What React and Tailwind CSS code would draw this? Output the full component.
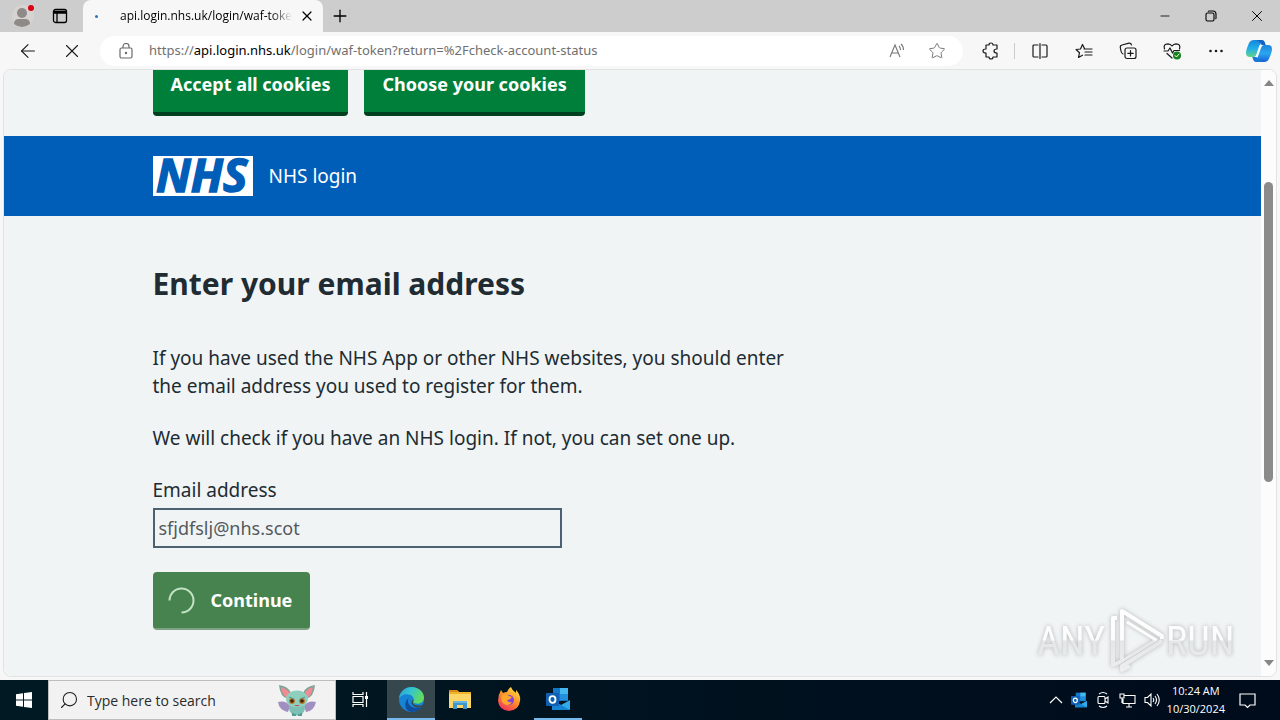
import { Star, X, Plus, Minus, ArrowLeft, Search } from "lucide-react";

const ui = "font-['Open_Sans','Noto_Sans',sans-serif]";

function TabStrip() {
    return (
        <header className="flex h-8 shrink-0 items-stretch bg-[#cdcdcd] text-black">
            <div className="flex w-[83px] items-center gap-[18px] pl-3">
                <button aria-label="Profile" className="relative">
                    <svg width="22" height="22" viewBox="0 0 22 22">
                        <circle cx="11" cy="11" r="11" fill="#d6d3d1" />
                        <circle cx="10" cy="8" r="5" fill="#8f8a87" />
                        <path d="M2 19q0-5 5-5h6q5 0 5 5-8 6-16 0z" fill="#8f8a87" />
                        <circle cx="19" cy="3" r="3" fill="#d90012" />
                    </svg>
                </button>
                <button aria-label="Tab actions">
                    <svg width="16" height="16" viewBox="0 0 16 16" fill="none" stroke="#000" strokeWidth="1.3">
                        <rect x="1.5" y="1.5" width="13" height="13" rx="2" />
                        <path d="M2 3.5h12M2 5h12M5 5v9" />
                    </svg>
                </button>
            </div>
            <div className="flex w-60 items-center rounded-t-lg bg-[#f7f7f7] pr-2">
                <span className="ml-3 size-[3px] rounded-full bg-[#2b74b8]" />
                <span className={`ml-[22px] w-[172px] overflow-hidden text-[12px] whitespace-nowrap [mask-image:linear-gradient(to_right,#000_88%,transparent)] ${ui}`}>
                    api.login.nhs.uk/login/waf-token
                </span>
                <button aria-label="Close tab" className="ml-auto">
                    <X size={16} strokeWidth={1.8} />
                </button>
            </div>
            <button aria-label="New tab" className="px-[7px]">
                <Plus size={20} strokeWidth={1.6} />
            </button>
            <div className="ml-auto flex">
                <button aria-label="Minimize" className="flex w-[46px] items-center justify-center">
                    <Minus size={14} strokeWidth={1.4} />
                </button>
                <button aria-label="Restore" className="flex w-[46px] items-center justify-center">
                    <svg width="12" height="12" viewBox="0 0 12 12" fill="none" stroke="#000" strokeWidth="1.1">
                        <rect x="1" y="3" width="8" height="8" rx="1.5" />
                        <path d="M3 1.5Q3.500 1 4 1h4q3 0 3 3v4q0 .5-.5 1" />
                    </svg>
                </button>
                <button aria-label="Close" className="flex w-[46px] items-center justify-center">
                    <X size={18} strokeWidth={1.3} />
                </button>
            </div>
        </header>
    );
}

function ToolIcon({ label, children }) {
    return (
        <button aria-label={label} className="flex w-11 items-center justify-center">
            <svg width="18" height="18" viewBox="0 0 18 18" fill="none" stroke="#1a1a1a" strokeWidth="1.2" strokeLinejoin="round" strokeLinecap="round">
                {children}
            </svg>
        </button>
    );
}

function CopilotLogo() {
    return (
        <svg width="26" height="24" viewBox="0 0 26 24">
            <defs>
                <linearGradient id="cpA" x1="0" y1="0" x2="0" y2="1">
                    <stop offset="0" stopColor="#1386d8" />
                    <stop offset=".5" stopColor="#20aeea" />
                    <stop offset="1" stopColor="#62d38b" />
                </linearGradient>
                <linearGradient id="cpB" x1="0" y1="0" x2="0" y2="1">
                    <stop offset="0" stopColor="#1b86dc" />
                    <stop offset=".5" stopColor="#2ba6f0" />
                    <stop offset="1" stopColor="#1660d8" />
                </linearGradient>
            </defs>
            <path d="M8 1h8l-5 14q-.8 3-3 3H4q-4 0-4-4 0-2 1-5l2-5Q4.500 1 8 1z" fill="url(#cpA)" />
            <path d="M18 23H10l5-14q.8-3 3-3h4q4 0 4 4 0 2-1 5l-1.500 3.500Q22 23 18 23z" fill="url(#cpB)" />
            <path d="M10 1h6q2 0 2.700 2l1 3h-4q-2-4-5.700-5z" fill="#1262c4" />
            <path d="M16 23h-6q-2 0-2.700-2l-1-3h3q3 0 6.700 5z" fill="#1a78d6" />
            <path d="M13.500 6H16q-1 1-1.500 3l-2.500 7q-.7 2-2 2H8.500q1.200-.5 2-3z" fill="#f4f9fc" />
        </svg>
    );
}

function Toolbar() {
    return (
        <nav className="flex h-[37px] shrink-0 items-center bg-[#f7f7f7] text-[#1a1a1a]">
            <button aria-label="Back" className="flex w-11 justify-center pl-3">
                <ArrowLeft size={22} strokeWidth={1.2} />
            </button>
            <button aria-label="Stop" className="flex w-11 justify-center pl-3">
                <X size={22} strokeWidth={1.2} />
            </button>
            <div className="ml-3 flex h-[30px] flex-1 items-center rounded-full bg-white pl-[18px]">
                <svg width="16" height="16" viewBox="0 0 16 16" fill="none" stroke="#6b6b6b" strokeWidth="1.2">
                    <rect x="2" y="5" width="12" height="10" rx="1.500" />
                    <path d="M5 5V3.500a3 3 0 0 1 6 0V5" />
                    <circle cx="8" cy="10" r=".6" fill="#6b6b6b" />
                </svg>
                <div className="ml-[15px] flex-1 font-['Noto_Sans',sans-serif] text-[13px] text-[#707070]">
                    https://<span className="text-black">api.login.nhs.uk</span>/login/waf-token?return=%2Fcheck-account-status
                </div>
                <button aria-label="Read aloud" className="mr-[22px]">
                    <svg width="18" height="18" viewBox="0 0 18 18" fill="none" stroke="#767676" strokeWidth="1.1">
                        <path d="M2 15 7 3l5 12M3.500 11h7M11 4q1.500 1.500 1.500 4M13 2q2.500 2 2.500 6" />
                    </svg>
                </button>
                <button aria-label="Favourite" className="mr-[17px]">
                    <Star size={18} strokeWidth={1.3} color="#767676" />
                </button>
            </div>
            <div className="flex pl-1.5">
                <ToolIcon label="Extensions">
                    <path d="M4 3h3q0-2 2-2t2 2h4v4q-3 0-3 2t3 2v4h-4q0 2-2 2t-2-2H4v-4q-3 0-3-2t3-2z" />
                </ToolIcon>
                <span className="mr-[3px] ml-px h-4 w-px self-center bg-[#cccccc]" />
                <ToolIcon label="Split screen">
                    <path d="M7 3H3Q2 3 2 4v10q0 1 1 1h4M11 3h4q1 0 1 1v10q0 1-1 1h-4M9 1.500v15" />
                </ToolIcon>
                <ToolIcon label="Favourites">
                    <path d="M9.500 6.500 7.500 2.500 5.500 7 1 7.500l3.500 3.200L3.500 15.500l4-2.300M9 7h8M10 10h7M10 13h7" />
                </ToolIcon>
                <ToolIcon label="Collections">
                    <rect x="6" y="6" width="11" height="10.500" rx="2" />
                    <path d="M11.500 8.500v5.500M8.800 11.300h5.400M4 12Q2.500 11.500 2 9L1.300 5.500Q1 3.500 3 3l7-1.800Q12 1 12.500 3" />
                </ToolIcon>
                <ToolIcon label="Browser essentials">
                    <path d="M1.500 7Q0 2 5 1.800 7.500 2 9 4q1.500-2 4-2.200Q18 2 16.500 7M1 9h4l2-3 2.500 5L11 8.500h5.500M4 11.500l5 4.500" />
                    <circle cx="14" cy="13.500" r="4" fill="#16821d" stroke="none" />
                    <path d="m12 13.500 1.500 1.500 2.500-3" stroke="#fff" strokeWidth="1" />
                </ToolIcon>
                <ToolIcon label="More">
                    <g fill="#1a1a1a" stroke="none">
                        <circle cx="3.500" cy="9" r="1.300" />
                        <circle cx="9" cy="9" r="1.300" />
                        <circle cx="14.500" cy="9" r="1.300" />
                    </g>
                </ToolIcon>
            </div>
            <button aria-label="Copilot" className="mr-2 ml-2">
                <CopilotLogo />
            </button>
        </nav>
    );
}

function CookieButton({ children }) {
    return (
        <button className="h-[60px] rounded border-b-4 border-[#00401e] bg-[#007f3b] px-[18px] text-[18px] font-bold text-white">
            {children}
        </button>
    );
}

function LoginPage() {
    return (
        <main className="min-w-0 flex-1 overflow-hidden bg-[#f0f4f5] font-['Noto_Sans',sans-serif] text-[#212b32]">
            <div className="flex h-[66px] items-end overflow-hidden pb-5">
                <div className="mx-auto flex w-full max-w-[960px] gap-4">
                    <CookieButton>Accept all cookies</CookieButton>
                    <CookieButton>Choose your cookies</CookieButton>
                </div>
            </div>
            <div className="bg-[#005eb8] py-5">
                <div className="mx-auto flex max-w-[960px] items-center gap-4 text-[19px] text-white">
                    <svg width="100" height="40" viewBox="0 0 100 40" role="img" aria-label="NHS" className="overflow-visible">
                        <rect width="100" height="40" fill="#fff" />
                        <text x="3" y="36" fill="#005eb8" stroke="#005eb8" strokeWidth="1.500" className="font-['Open_Sans',sans-serif] text-[46px] font-bold italic">NHS</text>
                    </svg>
                    <a href="#login">NHS login</a>
                </div>
            </div>
            <form className="mx-auto max-w-[960px] pt-12 text-[19px] leading-7" onSubmit={(e) => e.preventDefault()}>
                <div className="max-w-[640px]">
                    <h1 className="mb-10 text-[30px] leading-10 font-bold">Enter your email address</h1>
                    <p className="mb-6">
                        If you have used the NHS App or other NHS websites, you should enter the email address you used to register for them.
                    </p>
                    <p className="mb-6">We will check if you have an NHS login. If not, you can set one up.</p>
                    <label htmlFor="email" className="mb-1 block">Email address</label>
                    <input
                        id="email"
                        type="email"
                        defaultValue="sfjdfslj@nhs.scot"
                        className="mb-6 block h-10 w-full max-w-[409px] border-2 border-[#4c6272] px-1 text-[18px] text-[#54595c]"
                    />
                    <button className="flex h-[58px] items-center gap-4 rounded border-b-2 border-[#7fa287] bg-[#46834e] pr-[18px] pl-[15px] text-[18px] font-bold text-white">
                        <svg width="27" height="27" viewBox="0 0 27 27" fill="none" stroke="#c4e3c5" strokeWidth="2">
                            <path d="M1.500 13.500a12 12 0 1 1 12 12" />
                        </svg>
                        Continue
                    </button>
                </div>
            </form>
        </main>
    );
}

function Scrollbar() {
    return (
        <div className="flex w-[15px] shrink-0 flex-col items-center justify-between bg-[#fcfcfc] py-2.5">
            <svg width="10" height="6" viewBox="0 0 10 6"><path d="M5 0l5 6H0z" fill="#868686" /></svg>
            <div className="flex w-full flex-1 flex-col items-center">
                <div className="flex-[95]" />
                <div className="w-[9px] flex-[299] rounded-full bg-[#8b8b8b]" />
                <div className="flex-[177]" />
            </div>
            <svg width="10" height="6" viewBox="0 0 10 6"><path d="M0 0h10L5 6z" fill="#868686" /></svg>
        </div>
    );
}

function Watermark() {
    return (
        <svg className="pointer-events-none absolute right-10 bottom-1 overflow-visible drop-shadow-[0_0_2px_#b4b4b4]" width="200" height="70" viewBox="0 0 200 70">
            <defs>
                <linearGradient id="wm" gradientUnits="userSpaceOnUse" x1="0" y1="0" x2="0" y2="70">
                    <stop offset="0" stopColor="#ffffff" />
                    <stop offset=".54" stopColor="#fbfcfc" />
                    <stop offset=".56" stopColor="#e4e7e8" />
                    <stop offset="1" stopColor="#eceeef" />
                </linearGradient>
            </defs>
            <g fill="url(#wm)" className="font-['Liberation_Sans_Narrow','Roboto_Condensed','Roboto',sans-serif] text-[40px]">
                <text x="1" y="53">ANY</text>
                <text x="130" y="53">RUN</text>
            </g>
            <g fill="none" stroke="url(#wm)" strokeWidth="4" strokeLinejoin="round">
                <path d="M81 16h-4v47l9-4" />
                <path d="M86 60V9l40 25v3" />
                <path d="M126 39 86 64v4l8-4" />
                <path d="M91 20l29 18-34 21" strokeWidth="3" />
            </g>
        </svg>
    );
}

function Mascot() {
    return (
        <svg width="40" height="34" viewBox="0 0 40 34">
            <path d="M1 19q8-2 12 4l-2 6Q2 27 1 19zM39 19q-8-2-12 4l2 6q8-1 10-10z" fill="#a08fc0" />
            <path d="M2 2q9 1 12 8l-3 6Q3 14 2 2zM38 2q-9 1-12 8l3 6q8-2 9-14z" fill="#79a598" />
            <path d="M4 4q7 2 9 7l-3 4Q5 12 4 4zM36 4q-7 2-9 7l3 4q5-3 6-11z" fill="#f28a94" />
            <ellipse cx="20" cy="25" rx="8" ry="7.500" fill="#7dbfb2" />
            <ellipse cx="20" cy="16" rx="11" ry="8.500" fill="#8fcfbe" />
            <circle cx="15" cy="18" r="3" fill="#b87b30" />
            <circle cx="25" cy="18" r="3" fill="#b87b30" />
            <circle cx="15" cy="18" r="1.800" fill="#40210e" />
            <circle cx="25" cy="18" r="1.800" fill="#40210e" />
            <path d="M12 14l5 2M28 14l-5 2" stroke="#5b9487" />
            <path d="M17 22q3 2.500 6 0z" fill="#b0585c" />
            <path d="M16 30v3M18 31v2M22 31v2M24 30v3" stroke="#559d92" strokeWidth="2" />
        </svg>
    );
}

function OutlookIcon({ size }) {
    return (
        <svg width={size} height={size} viewBox="0 0 24 24">
            <path d="M7 1h15v13H7z" fill="#1476c8" />
            <path d="M14 1h8v6h-8z" fill="#45b8f0" />
            <path d="M14 7h8v6h-8z" fill="#248fdd" />
            <path d="M6 13l9 5 9-5v9q0 1-1 1H7q-1 0-1-1z" fill="#32a9e9" />
            <path d="M6 13l18 10H7q-1 0-1-1z" fill="#1684d3" />
            <rect y="6" width="13" height="13" rx="1" fill="#0f5fb4" />
            <ellipse cx="6.500" cy="12.500" rx="3" ry="3.300" fill="none" stroke="#fff" strokeWidth="1.800" />
        </svg>
    );
}

function EdgeIcon() {
    return (
        <svg width="25" height="25" viewBox="0 0 24 24">
            <defs>
                <linearGradient id="edgeTop" x1="0" y1="0" x2="1" y2=".4">
                    <stop offset="0" stopColor="#289ddc" />
                    <stop offset=".5" stopColor="#35c5ce" />
                    <stop offset="1" stopColor="#61dc60" />
                </linearGradient>
            </defs>
            <circle cx="12" cy="12" r="12" fill="#1683d4" />
            <path d="M0 11C1 4 6 0 12 0c7 0 12 5 12 10 0 4-3 6-6 6-4 0-5-1-4-3 1-3-2-6-6-6-4 0-7 2-8 4z" fill="url(#edgeTop)" />
            <path d="M9 11c-2 5 3 10 9 9 2 0 3-1 4-2-3 6-9 7-13 5-4-3-4-9 0-12z" fill="#124c9c" />
            <path d="M14 13c-2 3 1 5 5 5 2 0 4-1 5-2v2l-2 1c-5 2-10-1-10-4 0-2 2-4 2-2z" fill="#37474e" />
        </svg>
    );
}

function FolderIcon() {
    return (
        <svg width="22" height="20" viewBox="0 0 22 20">
            <path d="M0 1h8l2 2h12v16H0z" fill="#f0b429" />
            <path d="M0 5h22v14H0z" fill="#fcd667" />
            <path d="M0 1h8l2 2H0z" fill="#d88b1c" />
            <path d="M4 12h14v8h-4v-4H8v4H4z" fill="#3f96cf" />
            <path d="M4 12h14v2H4z" fill="#65b6e1" />
        </svg>
    );
}

function FirefoxIcon() {
    return (
        <svg width="24" height="24" viewBox="0 0 24 24">
            <defs>
                <linearGradient id="fox" x1=".8" y1="0" x2=".2" y2="1">
                    <stop offset="0" stopColor="#ffe23e" />
                    <stop offset=".5" stopColor="#ff8b28" />
                    <stop offset="1" stopColor="#f02a67" />
                </linearGradient>
            </defs>
            <path d="M4 3l2 3q2-1 4-1 1-3 4-5 1 3 4 5l1 1V3q5 5 4 11-1 9-11 10Q2 23 1 14 1 8 4 3z" fill="url(#fox)" />
            <circle cx="12" cy="13" r="5" fill="#8443d2" />
            <path d="M5 8q4-2 7 1l3 1q-2 3-5 3 1 3 5 2-3 5-8 2-4-3-2-9z" fill="#ffa72c" />
        </svg>
    );
}

function TaskButton({ label, active, open, children }) {
    return (
        <button
            aria-label={label}
            className={`flex w-12 items-center justify-center border-b-2 ${active ? "bg-[#37474e]" : ""} ${active || open ? "border-[#76b9ed]" : "border-transparent"}`}
        >
            {children}
        </button>
    );
}

function Taskbar() {
    return (
        <footer className={`flex h-10 shrink-0 items-stretch bg-linear-to-r from-[#001a23] to-[#000b1b] text-white ${ui}`}>
            <button aria-label="Start" className="flex w-12 items-center justify-center">
                <svg width="16" height="16" viewBox="0 0 16 16" fill="#fff">
                    <path d="M0 2.200 7 1.200v6.300H0zM8 1l8-1v7.500H8zM0 8.500h7v6.300l-7-1zM8 8.500h8V16l-8-1z" />
                </svg>
            </button>
            <label className="flex w-72 items-center border border-[#bdbdbd] bg-[#f2f2f2] pl-2.5 text-[#1e1e1e]">
                <Search size={20} strokeWidth={1.300} className="-scale-x-100" />
                <input type="text" aria-label="Search" placeholder="Type here to search" className="ml-2 min-w-0 flex-1 text-[14px] placeholder:text-[#2b2b2b]" />
                <span className="mr-[18px]"><Mascot /></span>
            </label>
            <div className="flex gap-px">
                <TaskButton label="Task view">
                    <svg width="17" height="17" viewBox="0 0 17 17" fill="none" stroke="#fff" strokeWidth="1.200">
                        <path d="M1 1v2.500h10V1M1 16v-2.500h10V16M1 5.500h10v6H1zM14.500 1v15" />
                        <path d="M13 5h3v3h-3z" fill="#fff" stroke="none" />
                    </svg>
                </TaskButton>
                <div className="ml-0.5 flex gap-px">
                    <TaskButton label="Edge" active><EdgeIcon /></TaskButton>
                    <TaskButton label="File Explorer"><FolderIcon /></TaskButton>
                    <TaskButton label="Firefox"><FirefoxIcon /></TaskButton>
                    <TaskButton label="Outlook" open><OutlookIcon size={24} /></TaskButton>
                </div>
            </div>
            <div className="ml-auto flex items-center gap-1.5">
                <div className="flex items-center gap-2">
                    <svg width="14" height="8" viewBox="0 0 14 8" fill="none" stroke="#fff" strokeWidth="1.200"><path d="m1 7 6-6 6 6" /></svg>
                    <OutlookIcon size={16} />
                    <svg width="16" height="18" viewBox="0 0 16 18" fill="none" stroke="#fff" strokeWidth="1.100">
                        <rect x="3" y="5.500" width="7" height="7" rx="1" />
                        <path d="m10 8 3-2v6l-3-2M4 3q4-3 8 0M4 15q4 3 8 0" />
                    </svg>
                    <svg width="17" height="16" viewBox="0 0 17 16" fill="none" stroke="#fff" strokeWidth="1.100">
                        <path d="M5 3.500h11v8H4V7M10 11.500V15M7 15h6M1 2h4v4H1zM3 6v5" />
                    </svg>
                    <svg width="17" height="16" viewBox="0 0 17 16" fill="none" stroke="#fff" strokeWidth="1.100">
                        <path d="M1 5.500h2.500L7 2v12l-3.500-3.500H1zM9 6q1.500 2 0 4M11 4q3 4 0 8M13 2q4.500 6 0 12" />
                    </svg>
                </div>
                <time className="text-center text-[11px] leading-[18px] whitespace-nowrap">
                    10:24 AM
                    <br />
                    10/30/2024
                </time>
                <button aria-label="Notifications" className="mr-6 ml-2">
                    <svg width="17" height="17" viewBox="0 0 17 17" fill="none" stroke="#fff" strokeWidth="1.200">
                        <path d="M1 2h15v11h-5l-2.500 2.500L6 13H1z" />
                    </svg>
                </button>
            </div>
        </footer>
    );
}

export default function App() {
    return (
        <div className="flex h-screen flex-col overflow-hidden bg-[#f7f7f7]">
            <TabStrip />
            <Toolbar />
            <div className="relative mx-[3px] mb-[3px] flex min-h-0 flex-1 overflow-hidden rounded-lg border border-[#e2e2e2]">
                <LoginPage />
                <Scrollbar />
                <Watermark />
            </div>
            <Taskbar />
        </div>
    );
}
